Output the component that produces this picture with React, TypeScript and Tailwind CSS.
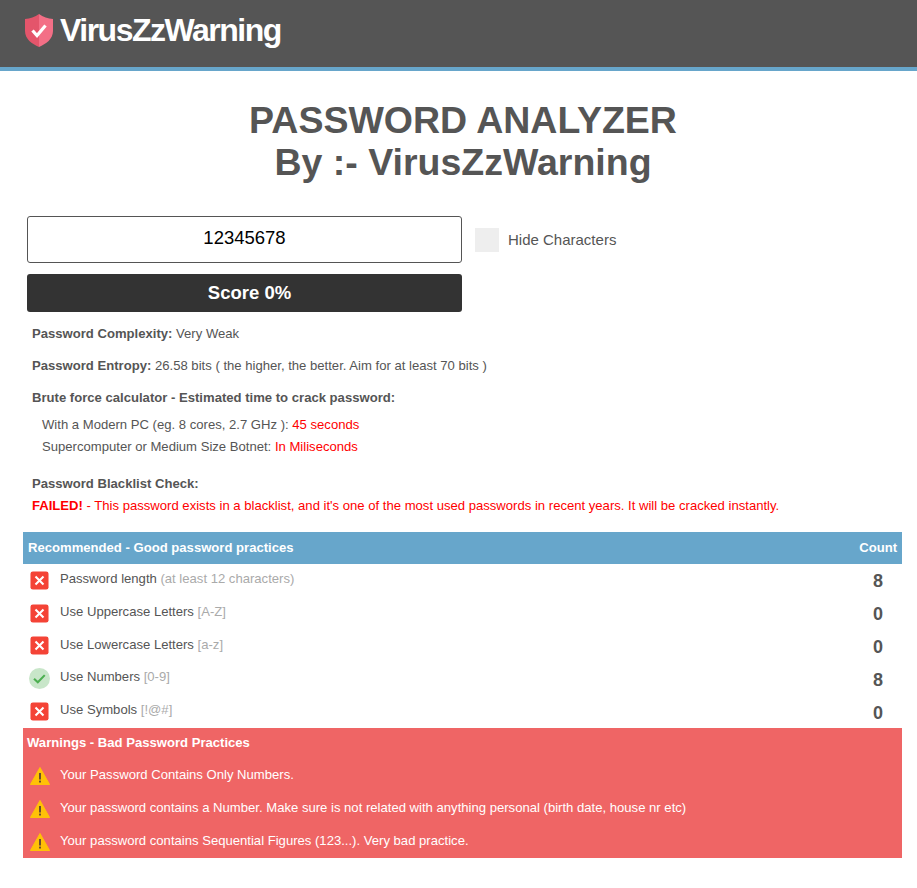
const font = "font-['Liberation_Sans',Arial,sans-serif]";

function CrossIcon() {
  return (
    <svg viewBox="0 0 20 20" className="w-[19px] h-[19px]">
      <rect x="0.5" y="0.5" width="19" height="19" rx="2.5" fill="#f44336" />
      <path d="M5.8 5.8 L14.2 14.2 M14.2 5.8 L5.8 14.2" stroke="#fff" strokeWidth="2.2" />
    </svg>
  );
}

function CheckIcon() {
  return (
    <svg viewBox="0 0 20 20" className="w-[21px] h-[21px]">
      <circle cx="10" cy="10" r="10" fill="#c8e6c9" />
      <path d="M4.8 10.2 L8.4 13.6 L15 6.8" fill="none" stroke="#4caf50" strokeWidth="2" />
    </svg>
  );
}

function WarnIcon() {
  return (
    <svg viewBox="0 0 20 18" className="w-[20px] h-[18px]">
      <path d="M10 0.5 L19.6 17.5 L0.4 17.5 Z" fill="#ffc107" stroke="#ffc107" strokeLinejoin="round" />
      <rect x="9.1" y="6" width="1.8" height="6.5" fill="#5d4037" />
      <rect x="9.1" y="13.6" width="1.8" height="1.9" fill="#5d4037" />
    </svg>
  );
}

function ShieldLogo() {
  return (
    <svg viewBox="0 0 28 33" className="w-[28px] h-[33px]">
      <path d="M14 0 C10 3 5 4.5 0 5 L0 17 C0 25 7 30 14 33 Z" fill="#e4556b" />
      <path d="M14 0 C18 3 23 4.5 28 5 L28 17 C28 25 21 30 14 33 Z" fill="#f36f86" />
      <path d="M7.5 16.5 L12 21.5 L20.5 11.5" fill="none" stroke="#fff" strokeWidth="3.2" />
    </svg>
  );
}

const practices = [
  { ok: false, label: "Password length", hint: "(at least 12 characters)", count: 8 },
  { ok: false, label: "Use Uppercase Letters", hint: "[A-Z]", count: 0 },
  { ok: false, label: "Use Lowercase Letters", hint: "[a-z]", count: 0 },
  { ok: true, label: "Use Numbers", hint: "[0-9]", count: 8 },
  { ok: false, label: "Use Symbols", hint: "[!@#]", count: 0 },
];

const warnings = [
  "Your Password Contains Only Numbers.",
  "Your password contains a Number. Make sure is not related with anything personal (birth date, house nr etc)",
  "Your password contains Sequential Figures (123...). Very bad practice.",
];

export default function App() {
  return (
    <div className={`${font} bg-white min-h-[888px] text-[#555]`}>
      <header className="h-[71px] bg-[#555] border-b-4 border-[#67a6cb] flex items-center pl-[25px] pb-[6px] gap-[7px]">
        <ShieldLogo />
        <span className="text-white text-[32px] font-bold tracking-[-1.5px] -mt-[2px]">VirusZzWarning</span>
      </header>

      <h1 className="pl-[9px] mt-[28px] text-center text-[37.5px] leading-[42px] font-bold text-[#555]">
        PASSWORD ANALYZER
        <br />
        By :- VirusZzWarning
      </h1>

      <div className="mt-[33px] pl-[27px] flex items-center">
        <input
          readOnly
          value="12345678"
          className="w-[435px] h-[47px] pb-[3px] border border-[#555] rounded-[3px] text-center text-[18.5px] text-black outline-none"
        />
        <span className="ml-[13px] w-[24px] h-[24px] bg-[#eee]" />
        <span className="ml-[9px] mt-[1px] text-[15px] text-[#555]">Hide Characters</span>
      </div>

      <div className="mt-[11px] ml-[27px] w-[435px] h-[38px] bg-[#333] rounded-[3px] flex items-center justify-center pl-[10px] text-white text-[18.5px] font-bold">
        Score 0%
      </div>

      <div className="mt-[12px] ml-[32px] text-[13.1px] leading-[20px]">
        <p><b>Password Complexity:</b> Very Weak</p>
        <p className="mt-[12px]"><b>Password Entropy:</b> 26.58 bits ( the higher, the better. Aim for at least 70 bits )</p>
        <p className="mt-[12px]"><b>Brute force calculator - Estimated time to crack password:</b></p>
        <div className="mt-[6px] ml-[10px] leading-[22px]">
          <p>With a Modern PC (eg. 8 cores, 2.7 GHz ): <span className="text-[#f00]">45 seconds</span></p>
          <p>Supercomputer or Medium Size Botnet: <span className="text-[#f00]">In Miliseconds</span></p>
        </div>
        <p className="mt-[16px]"><b>Password Blacklist Check:</b></p>
        <p className="mt-[2px] text-[#f00]"><b>FAILED!</b> - This password exists in a blacklist, and it's one of the most used passwords in recent years. It will be cracked instantly.</p>
      </div>

      <section className="mt-[16px] mx-[23px] w-[879px]">
        <div className="h-[32px] bg-[#67a6cb] text-white text-[13.1px] font-bold flex items-center justify-between px-[5px]">
          <span>Recommended - Good password practices</span>
          <span>Count</span>
        </div>
        {practices.map((p) => (
          <div key={p.label} className="h-[32.8px] flex items-center text-[13.1px]">
            <span className="w-[33px] mr-[4px] flex justify-center">{p.ok ? <CheckIcon /> : <CrossIcon />}</span>
            <span className="-mt-[3px]">{p.label} <span className="text-[#aaa]">{p.hint}</span></span>
            <span className="ml-auto w-[30px] mr-[9px] pt-[3px] text-center text-[18px] font-bold">{p.count}</span>
          </div>
        ))}
      </section>

      <section className="mx-[23px] w-[879px] h-[130px] bg-[#ef6565] text-white text-[13.1px]">
        <div className="h-[30px] flex items-center px-[4px] font-bold">Warnings - Bad Password Practices</div>
        {warnings.map((w) => (
          <div key={w} className="h-[33px] flex items-center">
            <span className="w-[33px] mr-[4px] flex justify-center pt-[3px]"><WarnIcon /></span>
            <span>{w}</span>
          </div>
        ))}
      </section>
    </div>
  );
}
